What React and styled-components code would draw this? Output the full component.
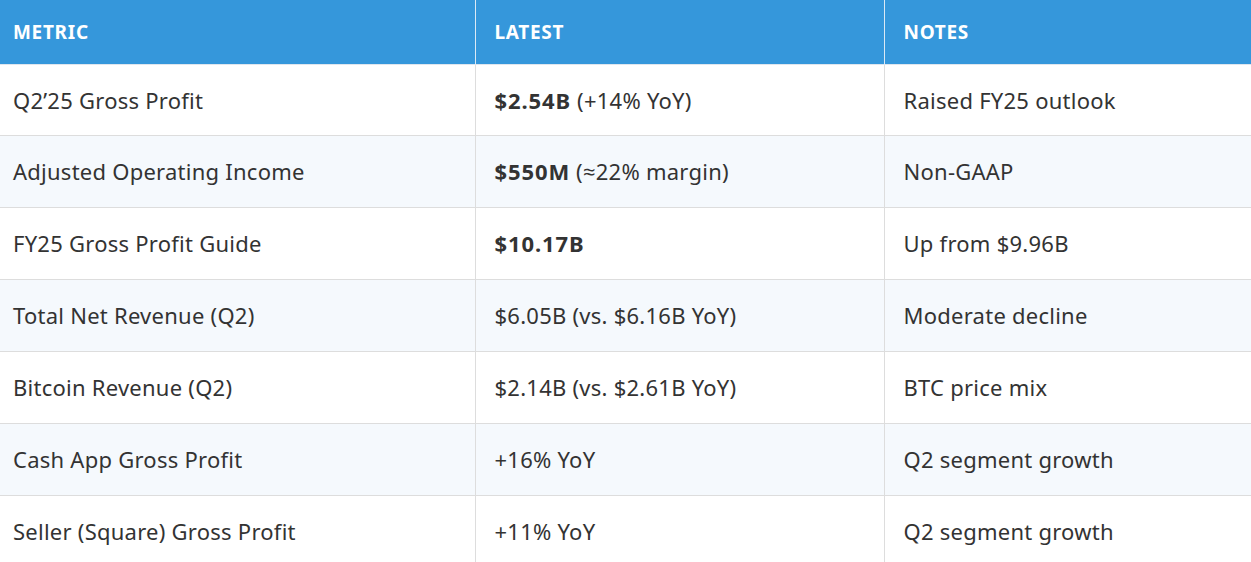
import React from 'react';
import styled, { createGlobalStyle } from 'styled-components';

const GlobalStyle = createGlobalStyle`
  html, body {
    margin: 0;
    padding: 0;
    background: #ffffff;
  }
  body {
    font-family: "Noto Sans", "Open Sans", sans-serif;
    color: #333333;
  }
`;

const rows = [
  { metric: 'Q2’25 Gross Profit', strong: '$2.54B', rest: ' (+14% YoY)', notes: 'Raised FY25 outlook' },
  { metric: 'Adjusted Operating Income', strong: '$550M', rest: ' (≈22% margin)', notes: 'Non-GAAP' },
  { metric: 'FY25 Gross Profit Guide', strong: '$10.17B', rest: '', notes: 'Up from $9.96B' },
  { metric: 'Total Net Revenue (Q2)', strong: '', rest: '$6.05B (vs. $6.16B YoY)', notes: 'Moderate decline' },
  { metric: 'Bitcoin Revenue (Q2)', strong: '', rest: '$2.14B (vs. $2.61B YoY)', notes: 'BTC price mix' },
  { metric: 'Cash App Gross Profit', strong: '', rest: '+16% YoY', notes: 'Q2 segment growth' },
  { metric: 'Seller (Square) Gross Profit', strong: '', rest: '+11% YoY', notes: 'Q2 segment growth' },
];

function App() {
  return (
    <>
      <GlobalStyle />
      <Table>
        <colgroup>
          <col style={{ width: 475 }} />
          <col style={{ width: 409 }} />
          <col />
        </colgroup>
        <thead>
          <tr>
            <HeadCell>Metric</HeadCell>
            <HeadCell>Latest</HeadCell>
            <HeadCell>Notes</HeadCell>
          </tr>
        </thead>
        <tbody>
          {rows.map((r, i) => (
            <Row key={i} $alt={i % 2 === 1}>
              <Cell>{r.metric}</Cell>
              <Cell>
                {r.strong && <Strong>{r.strong}</Strong>}
                {r.rest}
              </Cell>
              <Cell>{r.notes}</Cell>
            </Row>
          ))}
        </tbody>
      </Table>
    </>
  );
}

export default App;

const Table = styled.table`
  width: 100%;
  border-collapse: collapse;
  table-layout: fixed;
`;
const HeadCell = styled.th`
  background-color: #3597db;
  color: #ffffff;
  text-align: left;
  text-transform: uppercase;
  font-weight: 700;
  font-size: 19px;
  letter-spacing: 0.7px;
  height: 64px;
  padding: 0 19px;
  box-sizing: border-box;
  border-left: 1px solid #dbe9f5;
  &:first-child {
    border-left: none;
    padding-left: 13px;
  }
`;
const Row = styled.tr`
  background-color: ${(p) => (p.$alt ? '#f5f9fd' : '#ffffff')};
  border-top: 1px solid #dddddd;
  &:first-child {
    border-top-color: #dfe6ee;
  }
`;
const Cell = styled.td`
  height: 71px;
  padding: 0 19px;
  font-size: 22px;
  letter-spacing: 0.25px;
  color: #333333;
  border-left: 1px solid #dddddd;
  white-space: nowrap;
  &:first-child {
    border-left: none;
    padding-left: 13px;
  }
  tr:first-child > & {
    height: 70px;
  }
`;
const Strong = styled.strong`
  font-weight: 700;
  letter-spacing: 0.9px;
`;
